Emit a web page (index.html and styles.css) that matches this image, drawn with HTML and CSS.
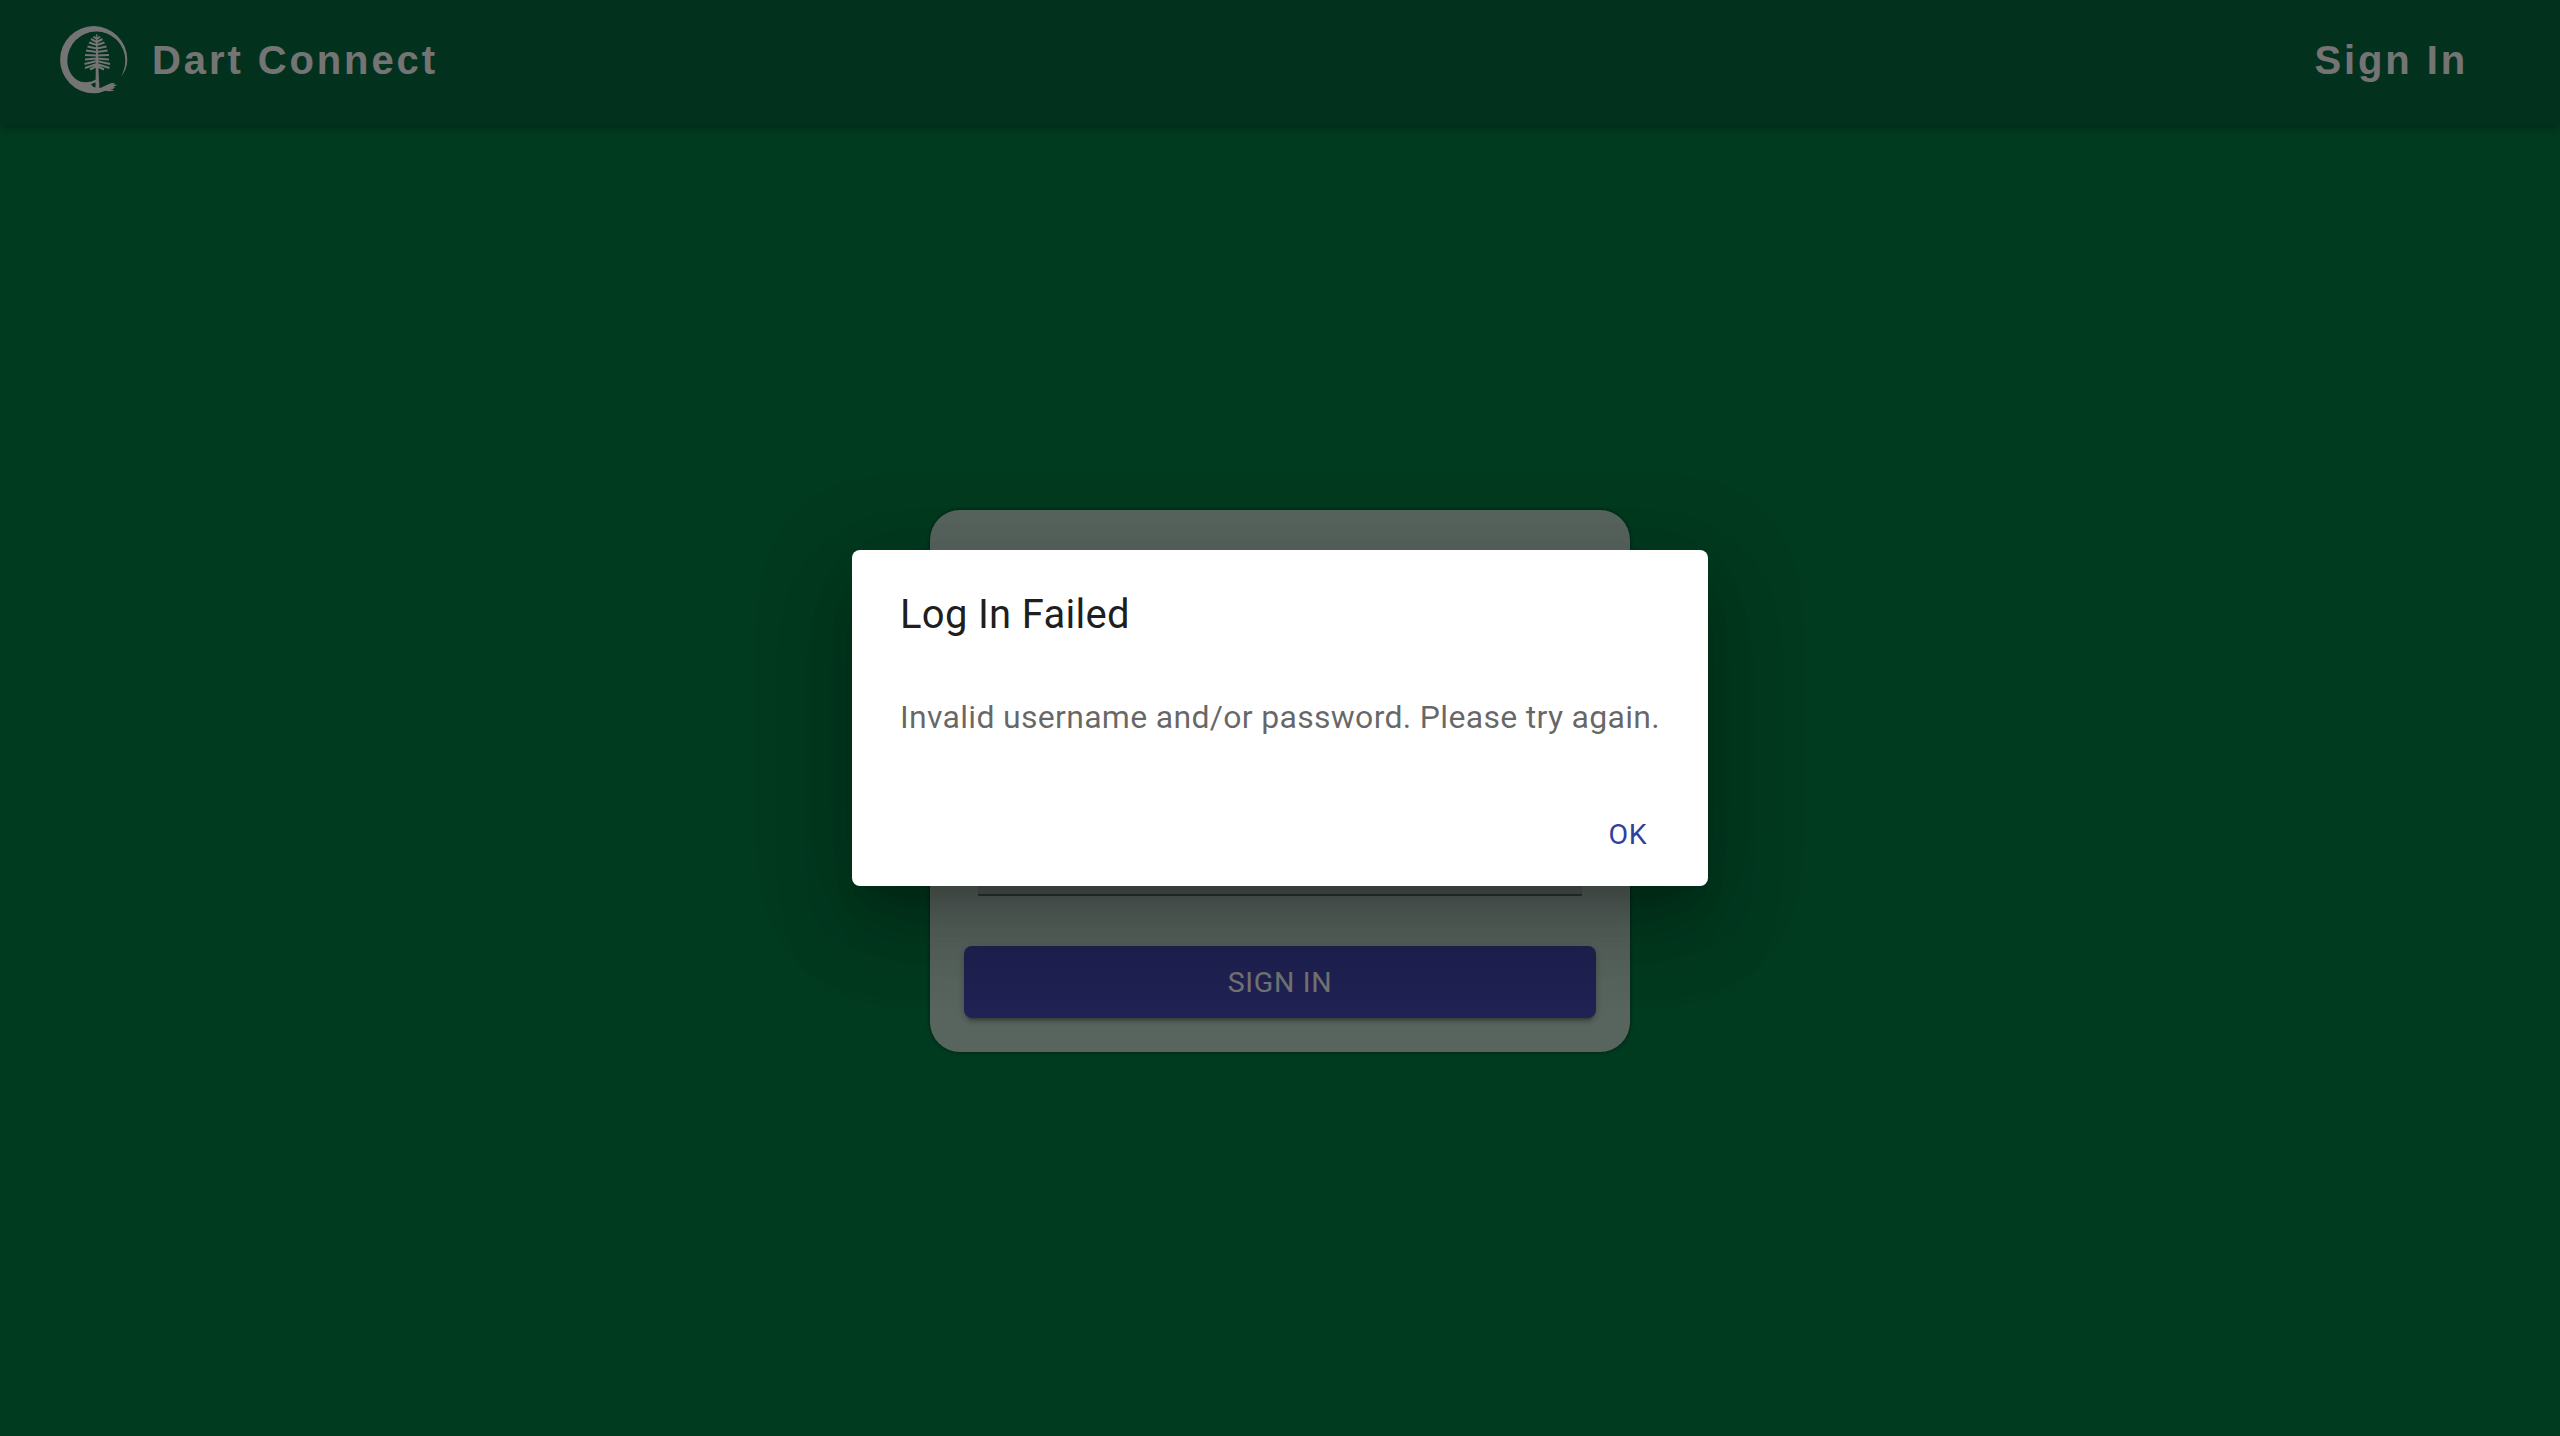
FILE: index.html
```html
<!DOCTYPE html>
<html lang="en">
<head>
<meta charset="utf-8">
<title>Dart Connect</title>
<link rel="stylesheet" href="styles.css">
</head>
<body>
<div class="page">
  <header class="bar">
    <a class="brand">
      <svg class="logo" viewBox="0 0 90 90" fill="currentColor">
        <path d="M71 61.500Q77.300 54 77.300 44.700A33.600 33.600 0 0 0 43.700 11.100A33.600 33.600 0 0 0 10.100 44.700A33.600 33.600 0 0 0 43.700 78.300Q50 78.300 56 75.500Q60 73 66.500 70.500Q67 69 63.500 69.500Q66.500 68 63 68C57 68.500 54 72.500 49.200 73V67H46V64.500Q42 67 36 67.300Q31 67.500 27 65C21 61 17.300 54 17.300 45.600A29.100 29.100 0 0 1 46.400 16.500A29.100 29.100 0 0 1 75.300 45.600Q75.300 54 71 61.500Z"/>
        <path d="M56 73.500Q60 71.500 65 72.300Q64.500 74 59 74.500Q64 74.500 64 75.700Q59 76.700 55 75.500Z"/>
        <path class="cut" d="M41 69.500Q43.500 67.500 46 67.500V72.500Q43 72.500 41 69.500Z"/>
        <path d="M46.200 19H47.300L49.200 73.500H45.500Z"/>
        <path class="needles" d="M46.800 24L43.500 21.500M46.800 27L41 24M46.800 30L39 27.500M46.800 33.500L37.500 31.500M46.800 37L36 35.500M46.800 40.500L35 40M46.800 43.500L35 44.500M46.800 46L34.500 49M46.800 49L35 53M46.800 51L40 54.500M46.800 24L50 21.500M46.800 27L52.500 24M46.800 30L54.500 27.500M46.800 33.500L56.500 31.500M46.800 37L57.500 35.500M46.800 40.500L59 40M46.800 43.500L59 44.500M46.800 46L60 49M46.800 49L59.500 53M46.800 51L54 54.500"/>
      </svg>
      <span>Dart Connect</span>
    </a>
    <a class="nav">Sign In</a>
  </header>
  <main class="main">
    <section class="card">
      <div class="field"></div>
      <button class="submit">SIGN IN</button>
    </section>
  </main>
</div>
<div class="backdrop">
  <div class="dialog" role="dialog">
    <h2 class="title">Log In Failed</h2>
    <div class="content"><p class="message">Invalid username and/or password. Please try again.</p></div>
    <div class="actions"><button class="ok">OK</button></div>
  </div>
</div>
</body>
</html>
```
FILE: styles.css
```css
* { box-sizing: border-box; }
body { margin: 0; background: #00743f; overflow: hidden; }
.page { height: 1436px; display: flex; flex-direction: column; }
.bar {
  height: 125px;
  padding: 0 92px 5px 50px;
  display: flex;
  align-items: center;
  justify-content: space-between;
  background: #04623c;
  color: #e8e8e8;
  font: bold 40px/1 "Liberation Sans", Arial, sans-serif;
  letter-spacing: 2.9px;
  box-shadow: 0 6px 6px -2px rgba(0, 0, 0, .2);
}
.brand { display: flex; align-items: center; gap: 12px; }
.logo { width: 90px; height: 90px; }
.cut { fill: #04623c; }
.needles { fill: none; stroke: currentColor; stroke-width: 2; }
.main { flex: 1; display: flex; justify-content: center; align-items: flex-start; padding-top: 385px; }
.card {
  width: 700px;
  height: 542px;
  padding: 34px;
  display: flex;
  flex-direction: column;
  justify-content: flex-end;
  gap: 50px;
  border-radius: 30px;
  background: #b1c9bd;
  box-shadow: 0 0 3px 1px rgba(0, 0, 0, .3);
}
.field { height: 96px; margin: 0 14px; background: #a0b4a8; border-bottom: 2px solid #5c6861; }
.submit {
  height: 72px;
  padding: 1px 0 0;
  border: 0;
  border-radius: 8px;
  background: #3e44a4;
  color: #e8e8e8;
  box-shadow: 0 6px 2px -4px rgba(0, 0, 0, .2), 0 4px 4px rgba(0, 0, 0, .14), 0 2px 10px rgba(0, 0, 0, .12);
}
.submit, .ok { font: 400 28.5px/48px Roboto, sans-serif; letter-spacing: .7px; }
.backdrop {
  position: absolute;
  inset: 0;
  display: flex;
  align-items: center;
  justify-content: center;
  background: rgba(0, 0, 0, .5);
}
.dialog {
  width: 856px;
  border-radius: 8px;
  background: #fff;
  font-family: Roboto, sans-serif;
  box-shadow: 0 22px 30px -14px rgba(0, 0, 0, .2), 0 48px 76px 6px rgba(0, 0, 0, .14), 0 18px 92px 16px rgba(0, 0, 0, .12);
}
.title { margin: 0; padding: 33px 48px 31px; font-size: 40px; font-weight: 400; line-height: 64px; letter-spacing: .3px; color: rgba(0, 0, 0, .9); }
.content { padding: 15px 48px 17px; }
.message { margin: 0 0 24px; font-size: 32px; line-height: 48px; letter-spacing: .3px; color: rgba(0, 0, 0, .6); white-space: nowrap; }
.actions { display: flex; justify-content: flex-end; padding: 16px; }
.ok { width: 128px; height: 72px; padding: 1px 0 0; border: 0; background: none; color: #303f9f; }
```
